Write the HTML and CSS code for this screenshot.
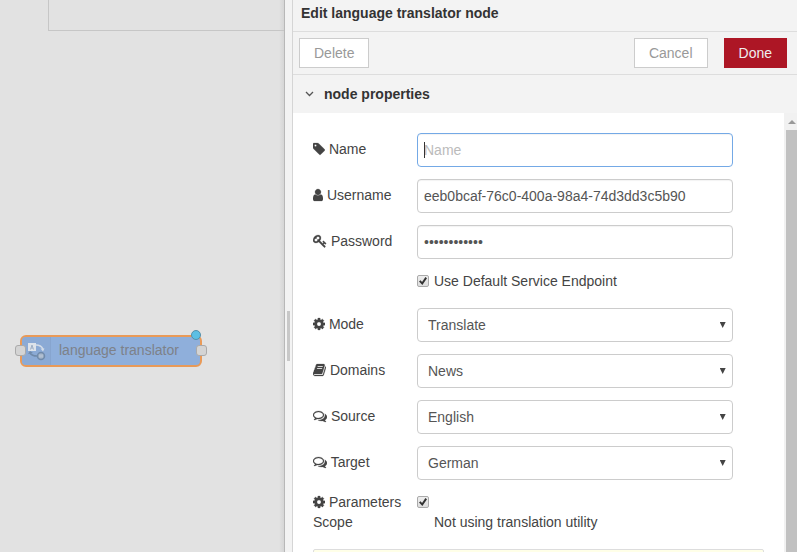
FILE: index.html
```
<!DOCTYPE html>
<html lang="en">
<head>
<meta charset="utf-8">
<title>Edit language translator node</title>
<link rel="stylesheet" href="styles.css">
</head>
<body>
<svg class="sprite" aria-hidden="true">
  <symbol id="tag" viewBox="128 0 1536 1792"><path d="M576 448q0-53-37.500-90.500t-90.500-37.500-90.500 37.500-37.500 90.500 37.500 90.500 90.500 37.500 90.500-37.500 37.500-90.500zm1067 576q0 53-37 90l-491 492q-39 37-91 37-53 0-90-37l-715-716q-38-37-64.500-101t-26.500-117v-416q0-52 38-90t90-38h416q53 0 117 26.500t102 64.500l715 714q37 39 37 91z"/></symbol>
  <symbol id="user" viewBox="256 0 1280 1792"><path d="M1536 1399q0 109-62.500 187t-150.500 78h-854q-88 0-150.500-78t-62.500-187q0-85 8.500-160.500t31.500-152 58.500-131 94-89 134.500-34.500q131 128 313 128t313-128q76 0 134.500 34.500t94 89 58.500 131 31.500 152 8.500 160.500zm-256-887q0 159-112.500 271.500t-271.500 112.500-271.500-112.500-112.500-271.500 112.500-271.500 271.500-112.500 271.500 112.500 112.500 271.500z"/></symbol>
  <symbol id="key" viewBox="0 0 1792 1792"><path d="M832 512q0-80-56-136t-136-56-136 56-56 136q0 42 19 83-41-19-83-19-80 0-136 56t-56 136 56 136 136 56 136-56 56-136q0-42-19-83 41 19 83 19 80 0 136-56t56-136zm851 704q0 17-49 66t-66 49q-9 0-28.500-16t-36.500-33-38.500-40-24.500-26l-96 96 220 220q28 28 28 68 0 42-39 81t-81 39q-40 0-68-28l-671-671q-176 131-365 131-163 0-265.500-102.500t-102.500-265.500q0-160 95-313t248-248 313-95q163 0 265.500 102.500t102.500 265.500q0 189-131 365l355 355 96-96q-3-3-26-24.500t-40-38.500-33-36.500-16-28.500q0-17 49-66t66-49q13 0 23 10 6 6 46 44.500t82 79.500 86.500 86 73 78 28.500 41z"/></symbol>
  <symbol id="cog" viewBox="128 0 1536 1792"><path d="M1152 896q0-106-75-181t-181-75-181 75-75 181 75 181 181 75 181-75 75-181zm512-109v222q0 12-8 23t-20 13l-185 28q-19 54-39 91 35 50 107 138 10 12 10 25t-9 23q-27 37-99 108t-94 71q-12 0-26-9l-138-108q-44 23-91 38-16 136-29 186-7 28-36 28h-222q-14 0-24.500-8.500t-11.500-21.500l-28-184q-49-16-90-37l-141 107q-10 9-25 9-14 0-25-11-126-114-165-168-7-10-7-23 0-12 8-23 15-21 51-66.500t54-70.500q-27-50-41-99l-183-27q-13-2-21-12.500t-8-23.500v-222q0-12 8-23t19-13l186-28q14-46 39-92-40-57-107-138-10-12-10-24 0-10 9-23 26-36 98.500-107.500t94.500-71.500q13 0 26 10l138 107q44-23 91-38 16-136 29-186 7-28 36-28h222q14 0 24.500 8.500t11.500 21.500l28 184q49 16 90 37l142-107q9-9 24-9 13 0 25 10 129 119 165 170 7 8 7 22 0 12-8 23-15 21-51 66.500t-54 70.500q26 50 41 98l183 28q13 2 21 12.500t8 23.500z"/></symbol>
  <symbol id="book" viewBox="64 0 1664 1792"><path d="M1703 478q40 57 18 129l-275 906q-19 64-76.500 107.500t-122.500 43.500h-923q-77 0-148.500-53.500t-99.500-131.500q-24-67-2-127 0-4 3-27t4-37q1-8-3-21.500t-3-19.500q2-11 8-21t16.500-23.500 16.500-23.500q23-38 45-91.500t30-91.500q3-10 .5-30t-.5-28q3-11 17-28t17-23q21-36 42-92t25-90q1-9-2.500-32t.5-28q4-13 22-30.500t22-22.500q19-26 42.500-84.500t27.500-96.500q1-8-3-25.500t-2-26.500q2-8 9-18t18-23 17-21q8-12 16.500-30.500t15-35 16-36 19.500-32 26.500-23.500 36-11.500 47.500 5.500l-1 3q38-9 51-9h761q74 0 114 56t18 130l-274 906q-36 119-71.500 153.500t-128.500 34.500h-869q-27 0-38 15-11 16-1 43 24 70 144 70h923q29 0 56-15.500t35-41.500l300-987q7-22 5-57 38 15 59 43zm-1064 2q-4 13 2 22.500t20 9.500h608q13 0 25.500-9.500t16.500-22.500l21-64q4-13-2-22.500t-20-9.500h-608q-13 0-25.500 9.500t-16.500 22.500zm-83 256q-4 13 2 22.500t20 9.500h608q13 0 25.500-9.500t16.500-22.500l21-64q4-13-2-22.500t-20-9.500h-608q-13 0-25.500 9.500t-16.500 22.500z"/></symbol>
  <symbol id="comments" viewBox="0 0 1792 1792"><path d="M704 384q-153 0-286 52t-211.500 141-78.500 191q0 82 53 158t149 132l97 56-35 84q34-20 62-39l44-31 53 10q78 14 153 14 153 0 286-52t211.500-141 78.500-191-78.500-191-211.500-141-286-52zm0-128q191 0 353.500 68.500t256.500 186.500 94 257-94 257-256.500 186.500-353.500 68.500q-86 0-176-16-124 88-278 128-36 9-86 16h-3q-11 0-20.500-8t-11.500-21q-1-3-1-6.500t.5-6.500 2-6l2.500-5 3.500-5.500 4-5 4.500-5 4-4.500q5-6 23-25t26-29.500 22.500-29 25-38.500 20.500-44q-124-72-195-177t-71-224q0-139 94-257t256.500-186.500 353.500-68.500zm822 1169q10 24 20.500 44t25 38.500 22.500 29 26 29.500 23 25q1 1 4 4.500t4.500 5 4 5 3.500 5.500l2.500 5 2 6 .5 6.500-1 6.500q-3 14-13 22t-22 7q-50-7-86-16-154-40-278-128-90 16-176 16-271 0-472-132 58 4 88 4 161 0 309-45t264-129q125-92 192-212t67-254q0-77-23-152 129 71 204 178t75 230q0 120-71 224.500t-195 176.500z"/></symbol>
</svg>
<div class="app">
  <main class="workspace">
    <div class="chart-edge"></div>
    <div class="node">
      <span class="node-icon">
        <svg width="20" height="20" viewBox="0 0 20 20" aria-hidden="true">
          <rect x="1" y="2" width="8" height="8" fill="#dde3ea"/>
          <path d="M3.500 8.500 5 4l1.500 4.500M4 7h2" fill="none" stroke="#9fb0c6"/>
          <path d="M9 4q5 0 7 4" fill="none" stroke="#d3dce8" stroke-width="1.500"/>
          <path d="M13.500 7.500h4l-1.500 3z" fill="#d3dce8"/>
          <path d="M3 12q2 3 7 3" fill="none" stroke="#708aaa" stroke-width="1.500"/>
          <path d="M1 13l2-3 3 2z" fill="#708aaa"/>
          <circle cx="14" cy="15" r="3.500" fill="#9fb0c6" stroke="#708aaa" stroke-width="1.500"/>
          <path d="M13 13.500v3M15 13.500v3" stroke="#c3cedb"/>
        </svg>
      </span>
      <span class="node-label">language translator</span>
      <span class="port port-in"></span>
      <span class="port port-out"></span>
      <span class="changed-dot"></span>
    </div>
  </main>
  <div class="separator"><div class="grip"></div></div>
  <section class="tray">
    <h1 class="tray-title">Edit language translator node</h1>
    <div class="toolbar">
      <button type="button" class="btn btn-delete">Delete</button>
      <button type="button" class="btn">Cancel</button>
      <button type="button" class="btn btn-primary">Done</button>
    </div>
    <h2 class="section-title">
      <svg width="9" height="6" viewBox="0 0 9 6" aria-hidden="true"><path d="M1 1l3.500 3.500L8 1" fill="none" stroke="#555" stroke-width="1.300"/></svg>
      node properties
    </h2>
    <div class="tray-body">
      <form class="form">
        <div class="row">
          <label for="name"><svg class="w12"><use href="#tag"/></svg> Name</label>
          <div class="field focused"><input id="name" type="text" placeholder="Name"></div>
        </div>
        <div class="row">
          <label for="username"><svg class="w10"><use href="#user"/></svg> Username</label>
          <div class="field"><input id="username" type="text" value="eeb0bcaf-76c0-400a-98a4-74d3dd3c5b90"></div>
        </div>
        <div class="row">
          <label for="password"><svg class="w14"><use href="#key"/></svg> Password</label>
          <div class="field"><input id="password" type="password" value="abcdefghijkl"></div>
        </div>
        <div class="row row-check indent">
          <input id="endpoint" type="checkbox" checked>
          <label for="endpoint" class="check-label">Use Default Service Endpoint</label>
        </div>
        <div class="row">
          <label for="mode"><svg class="w12"><use href="#cog"/></svg> Mode</label>
          <div class="field drop"><select id="mode"><option>Translate</option></select></div>
        </div>
        <div class="row">
          <label for="domains"><svg class="w13"><use href="#book"/></svg> Domains</label>
          <div class="field drop"><select id="domains"><option>News</option></select></div>
        </div>
        <div class="row">
          <label for="source"><svg class="w14"><use href="#comments"/></svg> Source</label>
          <div class="field drop"><select id="source"><option>English</option></select></div>
        </div>
        <div class="row">
          <label for="target"><svg class="w14"><use href="#comments"/></svg> Target</label>
          <div class="field drop"><select id="target"><option>German</option></select></div>
        </div>
        <div class="row row-check">
          <label for="scope"><svg class="w12"><use href="#cog"/></svg> Parameters Scope</label>
          <div class="scope">
            <input id="scope" type="checkbox" checked>
            <div class="scope-text">Not using translation utility</div>
          </div>
        </div>
        <div class="tips"></div>
      </form>
      <div class="scrollbar"><div class="scroll-up"></div><div class="thumb"></div></div>
    </div>
  </section>
</div>
</body>
</html>
```
FILE: styles.css
```
* { box-sizing: border-box; }

body {
  margin: 0;
  height: 100vh;
  overflow: hidden;
  font: 14px/20px "Liberation Sans", Arial, sans-serif;
  color: #444;
  background: #f3f3f3;
}

.sprite { display: none; }

.app {
  display: flex;
  min-height: 100vh;
}

/* Workspace */
.workspace {
  position: relative;
  flex: 0 0 285px;
  background: linear-gradient(to left, #d6d6d6, #e2e2e2 5px);
  border-right: 1px solid #b8b8b8;
}

.chart-edge {
  margin-left: 48px;
  height: 31px;
  border: solid #c6c6c6;
  border-width: 0 0 1px 1px;
}

.node {
  position: absolute;
  left: 20px;
  top: 335px;
  width: 182px;
  height: 32px;
  display: flex;
  background: #8fafdb;
  border: 2px solid #e99a58;
  border-radius: 6px;
  color: #7d8189;
}

.node-icon {
  display: flex;
  align-items: center;
  justify-content: center;
  width: 29px;
  padding-left: 2px;
  background: #8baad5;
  border-right: 1px solid #87a5cf;
  border-radius: 4px 0 0 4px;
}

.node-label {
  padding-left: 8px;
  line-height: 26px;
  white-space: nowrap;
}

.port {
  position: absolute;
  top: 8px;
  width: 11px;
  height: 11px;
  background: #d4d4d4;
  border: 1px solid #aaa;
  border-radius: 3px;
}

.port-in { left: -7px; }
.port-out { right: -7px; }

.changed-dot {
  position: absolute;
  right: -1px;
  top: -7px;
  width: 10px;
  height: 10px;
  background: #5cbfe4;
  border: 1px solid #5590ab;
  border-radius: 50%;
}

.separator {
  flex: 0 0 7px;
  padding: 311px 2px 0;
  background: #f3f3f3;
}

.grip {
  height: 50px;
  background: #c8c8c8;
}

/* Tray */
.tray {
  flex: 1;
  min-width: 0;
  display: flex;
  flex-direction: column;
  background: #f3f3f3;
  border-left: 1px solid #d5d5d5;
}

.tray-title,
.section-title {
  margin: 0;
  font-size: 14px;
  font-weight: bold;
  color: #333;
}

.tray-title {
  padding: 3px 8px 8px;
  border-bottom: 1px solid #ddd;
}

.toolbar {
  display: flex;
  gap: 16px;
  padding: 6px 10px 6px 6px;
  border-bottom: 1px solid #ddd;
}

.btn {
  height: 30px;
  padding: 0 14px;
  font: inherit;
  color: #999;
  background: #fff;
  border: 1px solid #ccc;
  border-radius: 0;
}

.btn-delete { margin-right: auto; }

.btn-primary {
  color: #eee;
  background: #ad1625;
  border-color: #ad1625;
}

.section-title {
  display: flex;
  align-items: center;
  gap: 10px;
  height: 38px;
  padding-left: 12px;
}

.tray-body {
  flex: 1;
  display: flex;
  background: #fff;
}

.form {
  flex: 1;
  padding: 20px 20px 0;
}

.row {
  display: flex;
  align-items: center;
  margin-bottom: 12px;
}

.row label {
  flex: 0 0 104px;
  padding-bottom: 2px;
}

.row label svg {
  height: 14px;
  fill: #444;
  stroke: #444;
  stroke-width: 30px;
  vertical-align: -2px;
}

.w10 { width: 10px; }
.w12 { width: 12px; }
.w13 { width: 13px; }
.w14 { width: 14px; }

.field {
  position: relative;
  width: 70%;
}

.field input,
.field select {
  display: block;
  width: 100%;
  height: 34px;
  margin: 0;
  padding: 0 6px;
  font: inherit;
  color: #555;
  background: #fff;
  border: 1px solid #ccc;
  border-radius: 4px;
  outline: 0;
}

.field input { box-shadow: inset 0 1px 1px rgba(0, 0, 0, .05); }

.field select {
  padding: 0 10px;
  appearance: none;
}

.field input::placeholder { color: #bbb; }

.focused input { border-color: #74a9e6; }

.focused::after {
  content: "";
  position: absolute;
  left: 7px;
  top: 9px;
  width: 1px;
  height: 16px;
  background: #333;
}

.drop::after {
  content: "";
  position: absolute;
  right: 7px;
  top: 14px;
  width: 6px;
  height: 6px;
  background: #444;
  clip-path: polygon(0 0, 100% 0, 50% 100%);
  pointer-events: none;
}

.row-check {
  align-items: flex-start;
  margin-bottom: 17px;
}

.row-check label { padding: 0; }

.indent { padding-left: 104px; }

.row .check-label {
  flex: 1;
  padding-left: 5px;
}

input[type="checkbox"] {
  appearance: none;
  display: block;
  position: relative;
  width: 12px;
  height: 12px;
  margin: 4px 0;
  background: linear-gradient(#eee, #ddd);
  border: 1px solid #aaa;
  border-radius: 2px;
}

input[type="checkbox"]:checked::after {
  content: "";
  position: absolute;
  inset: 1px;
  background: #333;
  clip-path: polygon(0 55%, 20% 40%, 38% 62%, 80% 0, 100% 15%, 42% 100%);
}

.scope-text { padding-left: 17px; }

.tips {
  height: 40px;
  background: #ffffe8;
  border: 1px solid #ddd;
  border-radius: 2px;
}

.scrollbar {
  width: 13px;
  display: flex;
  flex-direction: column;
  background: #f1f1f1;
}

.scroll-up {
  width: 8px;
  height: 4px;
  margin: 7px 0 6px 4px;
  background: #999;
  clip-path: polygon(50% 0, 100% 100%, 0 100%);
}

.thumb {
  flex: 1;
  margin-left: 2px;
  background: #c1c1c1;
}
```
